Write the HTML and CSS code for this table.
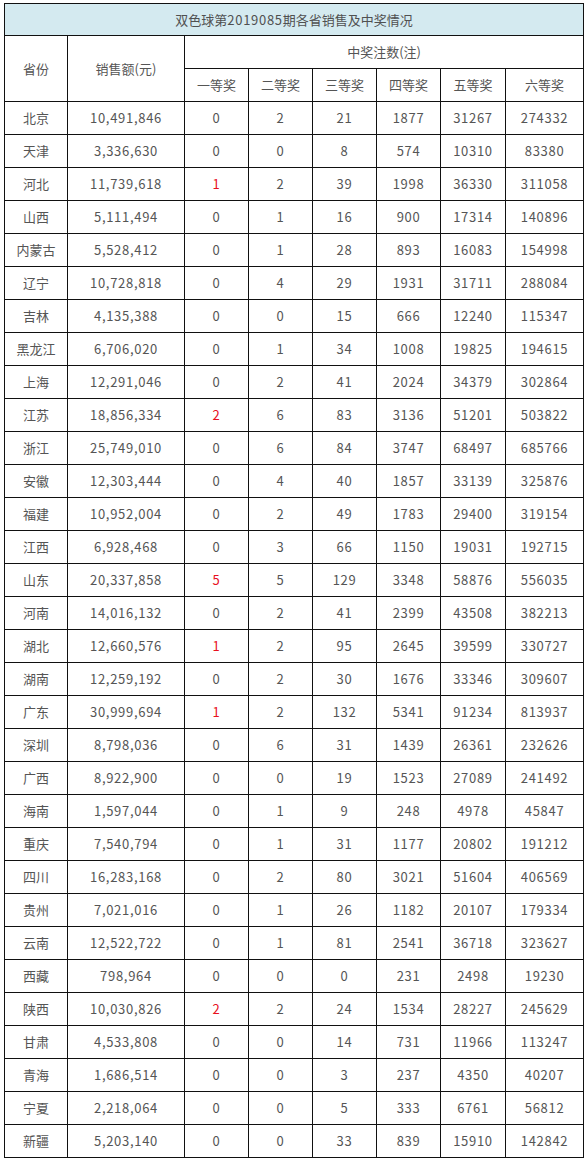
FILE: index.html
```html
<!DOCTYPE html>
<html lang="zh">
<head>
<meta charset="utf-8">
<title>双色球第2019085期各省销售及中奖情况</title>
<link rel="stylesheet" href="styles.css">
</head>
<body>
<table class="lottery">
<colgroup>
<col class="c-prov"><col class="c-sales"><col class="c-p"><col class="c-p"><col class="c-p"><col class="c-p"><col class="c-p5"><col class="c-p6">
</colgroup>
<tr class="title-row"><td colspan="8">双色球第<span class="num">2019085</span>期各省销售及中奖情况</td></tr>
<tr class="head-row"><td rowspan="2">省份</td><td rowspan="2">销售额(元)</td><td colspan="6">中奖注数(注)</td></tr>
<tr class="head-row"><td>一等奖</td><td>二等奖</td><td>三等奖</td><td>四等奖</td><td>五等奖</td><td>六等奖</td></tr>
<tr><td>北京</td><td>10,491,846</td><td>0</td><td>2</td><td>21</td><td>1877</td><td>31267</td><td>274332</td></tr>
<tr><td>天津</td><td>3,336,630</td><td>0</td><td>0</td><td>8</td><td>574</td><td>10310</td><td>83380</td></tr>
<tr><td>河北</td><td>11,739,618</td><td class="red">1</td><td>2</td><td>39</td><td>1998</td><td>36330</td><td>311058</td></tr>
<tr><td>山西</td><td>5,111,494</td><td>0</td><td>1</td><td>16</td><td>900</td><td>17314</td><td>140896</td></tr>
<tr><td>内蒙古</td><td>5,528,412</td><td>0</td><td>1</td><td>28</td><td>893</td><td>16083</td><td>154998</td></tr>
<tr><td>辽宁</td><td>10,728,818</td><td>0</td><td>4</td><td>29</td><td>1931</td><td>31711</td><td>288084</td></tr>
<tr><td>吉林</td><td>4,135,388</td><td>0</td><td>0</td><td>15</td><td>666</td><td>12240</td><td>115347</td></tr>
<tr><td>黑龙江</td><td>6,706,020</td><td>0</td><td>1</td><td>34</td><td>1008</td><td>19825</td><td>194615</td></tr>
<tr><td>上海</td><td>12,291,046</td><td>0</td><td>2</td><td>41</td><td>2024</td><td>34379</td><td>302864</td></tr>
<tr><td>江苏</td><td>18,856,334</td><td class="red">2</td><td>6</td><td>83</td><td>3136</td><td>51201</td><td>503822</td></tr>
<tr><td>浙江</td><td>25,749,010</td><td>0</td><td>6</td><td>84</td><td>3747</td><td>68497</td><td>685766</td></tr>
<tr><td>安徽</td><td>12,303,444</td><td>0</td><td>4</td><td>40</td><td>1857</td><td>33139</td><td>325876</td></tr>
<tr><td>福建</td><td>10,952,004</td><td>0</td><td>2</td><td>49</td><td>1783</td><td>29400</td><td>319154</td></tr>
<tr><td>江西</td><td>6,928,468</td><td>0</td><td>3</td><td>66</td><td>1150</td><td>19031</td><td>192715</td></tr>
<tr><td>山东</td><td>20,337,858</td><td class="red">5</td><td>5</td><td>129</td><td>3348</td><td>58876</td><td>556035</td></tr>
<tr><td>河南</td><td>14,016,132</td><td>0</td><td>2</td><td>41</td><td>2399</td><td>43508</td><td>382213</td></tr>
<tr><td>湖北</td><td>12,660,576</td><td class="red">1</td><td>2</td><td>95</td><td>2645</td><td>39599</td><td>330727</td></tr>
<tr><td>湖南</td><td>12,259,192</td><td>0</td><td>2</td><td>30</td><td>1676</td><td>33346</td><td>309607</td></tr>
<tr><td>广东</td><td>30,999,694</td><td class="red">1</td><td>2</td><td>132</td><td>5341</td><td>91234</td><td>813937</td></tr>
<tr><td>深圳</td><td>8,798,036</td><td>0</td><td>6</td><td>31</td><td>1439</td><td>26361</td><td>232626</td></tr>
<tr><td>广西</td><td>8,922,900</td><td>0</td><td>0</td><td>19</td><td>1523</td><td>27089</td><td>241492</td></tr>
<tr><td>海南</td><td>1,597,044</td><td>0</td><td>1</td><td>9</td><td>248</td><td>4978</td><td>45847</td></tr>
<tr><td>重庆</td><td>7,540,794</td><td>0</td><td>1</td><td>31</td><td>1177</td><td>20802</td><td>191212</td></tr>
<tr><td>四川</td><td>16,283,168</td><td>0</td><td>2</td><td>80</td><td>3021</td><td>51604</td><td>406569</td></tr>
<tr><td>贵州</td><td>7,021,016</td><td>0</td><td>1</td><td>26</td><td>1182</td><td>20107</td><td>179334</td></tr>
<tr><td>云南</td><td>12,522,722</td><td>0</td><td>1</td><td>81</td><td>2541</td><td>36718</td><td>323627</td></tr>
<tr><td>西藏</td><td>798,964</td><td>0</td><td>0</td><td>0</td><td>231</td><td>2498</td><td>19230</td></tr>
<tr><td>陕西</td><td>10,030,826</td><td class="red">2</td><td>2</td><td>24</td><td>1534</td><td>28227</td><td>245629</td></tr>
<tr><td>甘肃</td><td>4,533,808</td><td>0</td><td>0</td><td>14</td><td>731</td><td>11966</td><td>113247</td></tr>
<tr><td>青海</td><td>1,686,514</td><td>0</td><td>0</td><td>3</td><td>237</td><td>4350</td><td>40207</td></tr>
<tr><td>宁夏</td><td>2,218,064</td><td>0</td><td>0</td><td>5</td><td>333</td><td>6761</td><td>56812</td></tr>
<tr><td>新疆</td><td>5,203,140</td><td>0</td><td>0</td><td>33</td><td>839</td><td>15910</td><td>142842</td></tr>
</table>
</body>
</html>
```
FILE: styles.css
```css
html, body {
  margin: 0;
  padding: 0;
  background: #ffffff;
}
body {
  padding: 3px 0 0 4px;
  font-family: "Noto Sans CJK SC", "Noto Sans", sans-serif;
  font-size: 13px;
  color: #555555;
}
.lottery {
  border-collapse: collapse;
  table-layout: fixed;
  width: 580px;
}
.c-prov { width: 63px; }
.c-sales { width: 117px; }
.c-p { width: 64px; }
.c-p5 { width: 65px; }
.c-p6 { width: 78px; }
.lottery td {
  border: 1px solid #111111;
  text-align: center;
  vertical-align: middle;
  padding: 0;
  height: 32px;
  line-height: 16px;
  letter-spacing: 0.7px;
}
.lottery td:first-child,
.head-row td,
.title-row td {
  letter-spacing: 0;
}
.title-row .num {
  letter-spacing: 0.7px;
}
.title-row td {
  background: #d4eaf0;
  height: 31px;
  color: #505050;
}
.red {
  color: #e8101e;
}
```
